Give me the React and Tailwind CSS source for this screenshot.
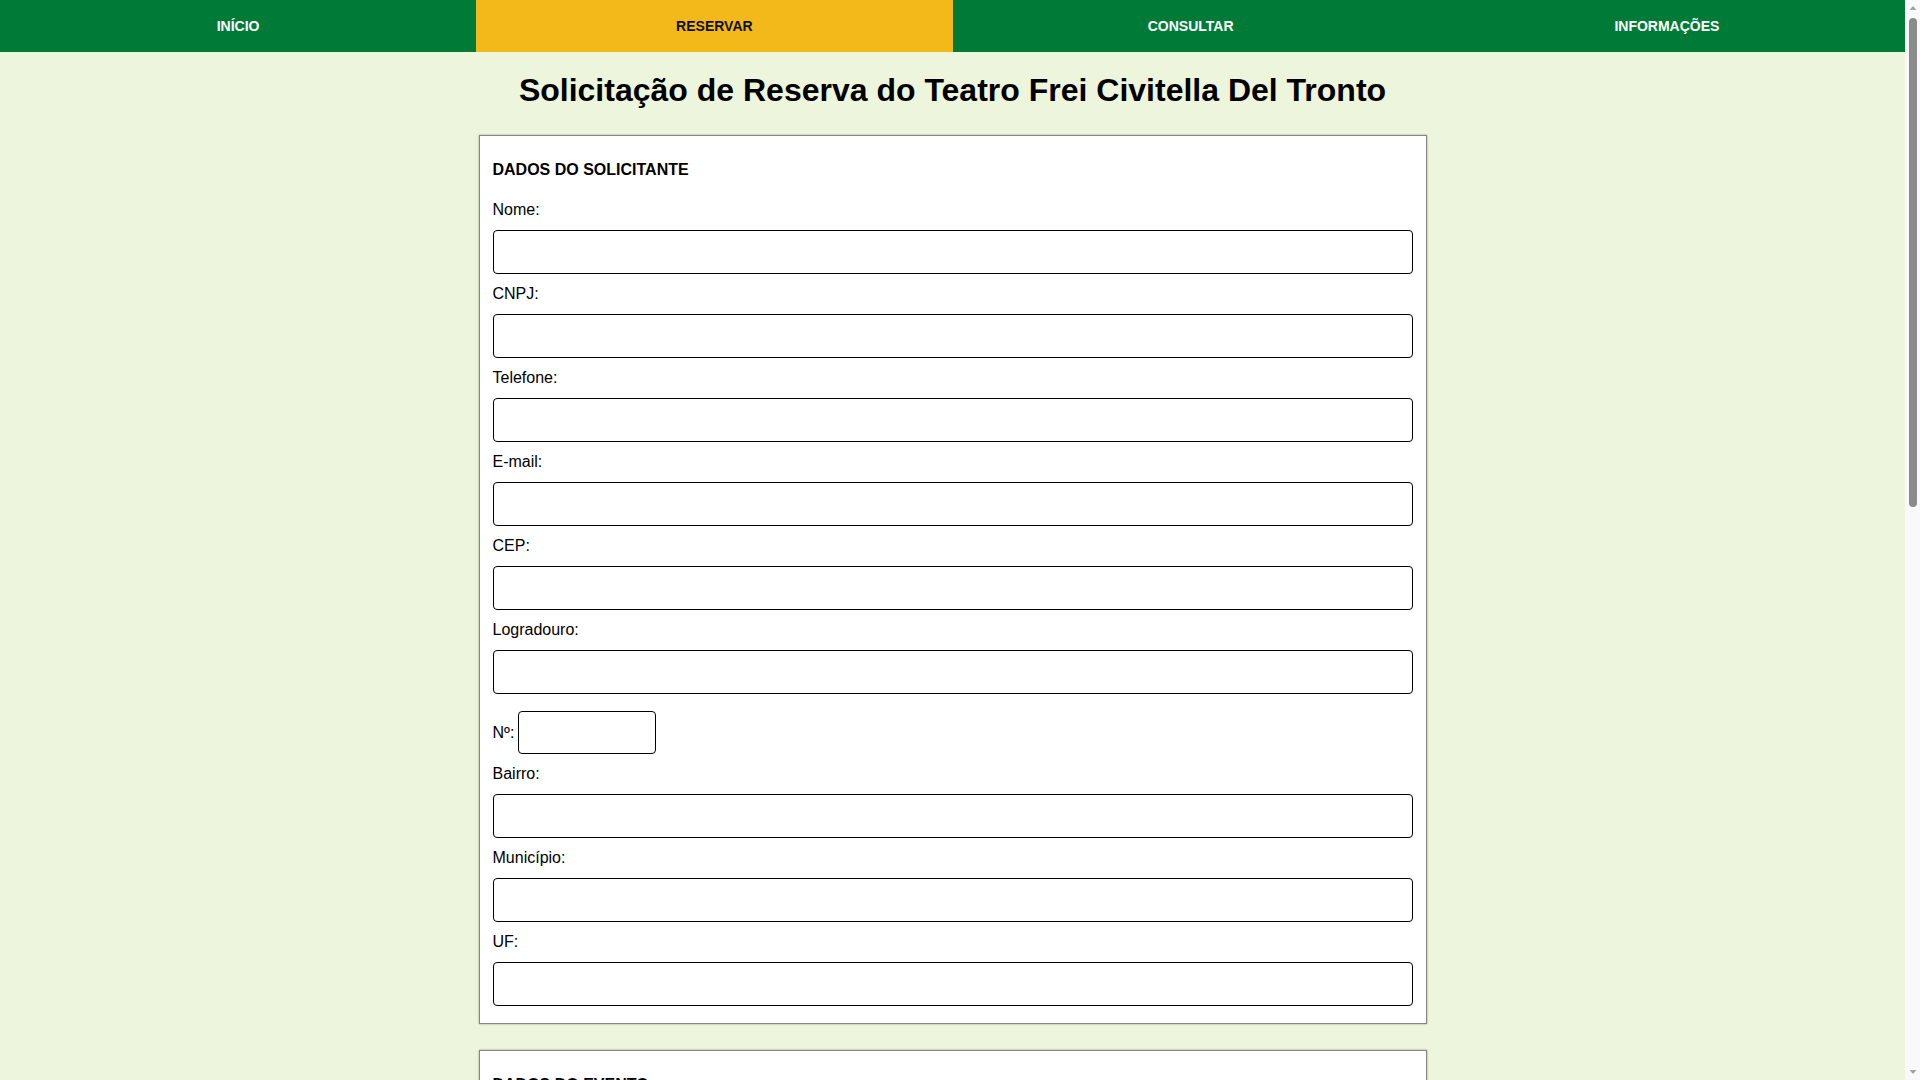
import React from "react";

const navItems = [
  { label: "INÍCIO", active: false },
  { label: "RESERVAR", active: true },
  { label: "CONSULTAR", active: false },
  { label: "INFORMAÇÕES", active: false },
];

function Field({ label, type = "text" }) {
  return (
    <div>
      <label className="block pt-[1px] leading-[18px] mb-[11px]">{label}</label>
      <input
        type={type}
        className="block w-full h-[44px] mb-[10px] border border-black rounded-[4px] bg-white px-2"
      />
    </div>
  );
}

function Card({ title, children, className = "" }) {
  return (
    <section
      className={`w-[948px] mx-auto bg-white border border-[#868686] shadow-[0_0_2px_rgba(0,0,0,0.35)] px-[13px] pt-[25px] pb-[7px] ${className}`}
    >
      <h2 className="font-bold leading-[18px] mb-[21px]">{title}</h2>
      {children}
    </section>
  );
}

function ScrollBar() {
  return (
    <aside className="sticky top-0 self-start w-[15px] h-[1080px] bg-[#f9f9fb] flex flex-col items-center">
      <svg width="8" height="6" viewBox="0 0 8 6" className="mt-[5px]">
        <path d="M4 1 L7.5 5 L0.5 5 Z" fill="#a3a3a3" />
      </svg>
      <div className="mt-[7px] w-[8px] h-[489px] rounded-full bg-[#8b8b8b]" />
      <div className="flex-1" />
      <svg width="8" height="6" viewBox="0 0 8 6" className="mb-[5px]">
        <path d="M0.5 1 L7.5 1 L4 5 Z" fill="#a3a3a3" />
      </svg>
    </aside>
  );
}

export default function App() {
  return (
    <div className="flex bg-[#edf5dc] text-[16px] text-black font-['Liberation_Sans',Arial,sans-serif]">
      <div className="w-[1905px] pb-[40px]">
        <nav className="grid grid-cols-4 h-[52px] bg-[#007b37]">
          {navItems.map((item) => (
            <a
              key={item.label}
              href="#"
              className={`flex items-center justify-center text-[14px] font-bold ${
                item.active ? "bg-[#f3b81a] text-[#111]" : "text-white"
              }`}
            >
              {item.label}
            </a>
          ))}
        </nav>

        <h1 className="text-center text-[32px] font-bold leading-[37px] mt-[20px] mb-[26px]">
          Solicitação de Reserva do Teatro Frei Civitella Del Tronto
        </h1>

        <form>
          <Card title="DADOS DO SOLICITANTE">
            <Field label="Nome:" />
            <Field label="CNPJ:" />
            <Field label="Telefone:" type="tel" />
            <Field label="E-mail:" type="email" />
            <Field label="CEP:" />
            <Field label="Logradouro:" />
            {/* margin collapses with the input above, so 17 = 10 + 7 */}
            <div className="flex items-center gap-[4px] mt-[17px] mb-[10px]">
              <label>Nº:</label>
              <input
                type="text"
                className="w-[138px] h-[43px] border border-black rounded-[4px] bg-white px-2"
              />
            </div>
            <Field label="Bairro:" />
            <Field label="Município:" />
            <Field label="UF:" />
          </Card>

          <Card title="DADOS DO EVENTO" className="mt-[26px]">
            <Field label="Nome do Evento:" />
            <Field label="Tipo de Evento:" />
            <Field label="Data do Evento:" type="date" />
            <Field label="Horário de Início:" type="time" />
            <Field label="Horário de Término:" type="time" />
            <Field label="Data da Montagem:" type="date" />
            <Field label="Horário da Montagem:" type="time" />
            <Field label="Público Estimado:" type="number" />
            <Field label="Responsável pelo Evento:" />
            <Field label="Telefone do Responsável:" type="tel" />
            <div>
              <label className="block pt-[1px] leading-[18px] mb-[11px]">Descrição do Evento:</label>
              <textarea className="block w-full h-[120px] mb-[10px] border border-black rounded-[4px] bg-white p-2" />
            </div>
          </Card>

          <div className="flex justify-center mt-[26px]">
            <button
              type="submit"
              className="h-[48px] px-[40px] bg-[#007b37] text-white font-bold text-[15px] rounded-[4px]"
            >
              ENVIAR SOLICITAÇÃO
            </button>
          </div>
        </form>
      </div>
      <ScrollBar />
    </div>
  );
}
